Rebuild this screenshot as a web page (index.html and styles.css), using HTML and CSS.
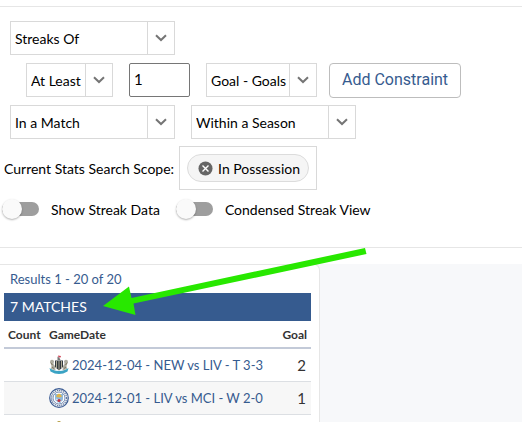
FILE: index.html
```html
<!DOCTYPE html>
<html lang="en">
<head>
    <meta charset="UTF-8">
    <meta name="viewport" content="width=device-width, initial-scale=1.0">
    <title>Streak Search</title>
    <link rel="stylesheet" href="styles.css">
</head>
<body>
    <form class="search-form">
        <div class="form-row">
            <div class="select-box wide">
                <select aria-label="Search type">
                    <option>Streaks Of</option>
                </select>
                <svg class="chevron" viewBox="0 0 12 8"><path d="M1 1.2 L6 6 L11 1.2"/></svg>
            </div>
        </div>
        <div class="form-row indent">
            <div class="select-box compare">
                <select aria-label="Comparison">
                    <option>At Least</option>
                </select>
                <svg class="chevron" viewBox="0 0 12 8"><path d="M1 1.2 L6 6 L11 1.2"/></svg>
            </div>
            <input class="amount" type="text" value="1" aria-label="Amount">
            <div class="stat-group">
                <div class="select-box stat">
                    <select aria-label="Stat">
                        <option>Goal - Goals</option>
                    </select>
                    <svg class="chevron" viewBox="0 0 12 8"><path d="M1 1.2 L6 6 L11 1.2"/></svg>
                </div>
                <button type="button" class="add-btn">Add Constraint</button>
            </div>
        </div>
        <div class="form-row">
            <div class="select-box wide">
                <select aria-label="Per">
                    <option>In a Match</option>
                </select>
                <svg class="chevron" viewBox="0 0 12 8"><path d="M1 1.2 L6 6 L11 1.2"/></svg>
            </div>
            <div class="select-box wide">
                <select aria-label="Span">
                    <option>Within a Season</option>
                </select>
                <svg class="chevron" viewBox="0 0 12 8"><path d="M1 1.2 L6 6 L11 1.2"/></svg>
            </div>
        </div>
        <div class="scope-row">
            <span>Current Stats Search Scope:</span>
            <div class="scope-box">
                <span class="chip">
                    <button type="button" class="chip-remove" aria-label="Remove In Possession">
                        <svg viewBox="0 0 16 16"><circle cx="8" cy="8" r="7.5"/><path d="M4.8 4.8 L11.2 11.2 M11.2 4.8 L4.8 11.2"/></svg>
                    </button>
                    In Possession
                </span>
            </div>
        </div>
        <div class="toggle-row">
            <label class="toggle"><input type="checkbox">Show Streak Data</label>
            <label class="toggle"><input type="checkbox">Condensed Streak View</label>
        </div>
    </form>

    <main class="results">
        <section class="results-card">
            <p class="results-count">Results 1 - 20 of 20</p>
            <table class="results-table">
                <caption>7 MATCHES</caption>
                <thead>
                    <tr>
                        <th class="count">Count</th>
                        <th>GameDate</th>
                        <th class="goal">Goal</th>
                    </tr>
                </thead>
                <tbody>
                    <tr>
                        <td></td>
                        <td>
                            <a href="#" class="game">
                                <svg class="crest" viewBox="0 0 20 20">
                                    <path d="M9 0.5 L12 1 L11.5 2.5 L9.5 2.5 Z" fill="#d0495a"/>
                                    <path d="M8.5 5 L8.5 1.5 L10.5 3 L11.5 5 Z" fill="#777"/>
                                    <path d="M6 5.5 H14 V12 L10 15.5 L6 12 Z" fill="#333a40"/>
                                    <path d="M7.5 6 V13 M10 6 V15 M12.5 6 V13" stroke="#cfc6aa" stroke-width="0.8"/>
                                    <path d="M1 6 Q3 3.5 5 6 L4.5 9 L6 11 L6.5 15.5 L2 14 L2.5 11 Z" fill="#aeaca0"/>
                                    <path d="M19 6 Q17 3.5 15 6 L15.5 9 L14 11 L13.5 15.5 L18 14 L17.5 11 Z" fill="#aeaca0"/>
                                    <path d="M1.5 7.5 L3.5 10 M18.5 7.5 L16.5 10 M3 12 L5 13.500 M17 12 L15 13.500" stroke="#756c52" stroke-width="0.8"/>
                                    <path d="M0.5 13 L3 14.5 Q10 17.5 17 14.5 L19.5 13 L18.5 16.5 Q10 21.5 1.500 16.500 Z" fill="#3aa3c4"/>
                                </svg>
                                2024-12-04 - NEW vs LIV - T 3-3
                            </a>
                        </td>
                        <td class="goal">2</td>
                    </tr>
                    <tr class="striped">
                        <td></td>
                        <td>
                            <a href="#" class="game">
                                <svg class="crest" viewBox="0 0 20 20">
                                    <circle cx="10" cy="10" r="9.3" fill="#f4f6f8" stroke="#3c5c94" stroke-width="1.2"/>
                                    <circle cx="10" cy="10" r="7.6" fill="none" stroke="#62789f" stroke-width="1.3" stroke-dasharray="1.2 0.9"/>
                                    <circle cx="10" cy="10" r="6" fill="#fff" stroke="#3c5c94" stroke-width="0.7"/>
                                    <path d="M6 6 H14 V11 Q13.5 14 10 15.5 Q6.5 14 6 11 Z" fill="#8fb9dc"/>
                                    <path d="M7 8.5 Q10 10.5 13 8.5 L12 6.8 L10 5.5 L8 6.8 Z" fill="#e0b64c"/>
                                    <path d="M7 11 L13 14 M6.5 13 L10 15" stroke="#fff" stroke-width="0.8"/>
                                    <circle cx="10" cy="12.5" r="1.6" fill="#bd3443"/>
                                </svg>
                                2024-12-01 - LIV vs MCI - W 2-0
                            </a>
                        </td>
                        <td class="goal">1</td>
                    </tr>
                    <tr>
                        <td></td>
                        <td>
                            <a href="#" class="game" aria-label="Match">
                                <svg class="crest" viewBox="0 0 20 20">
                                    <path d="M8 1 Q10 -1 12 1 L11 5 L14 7 L13 17 H7 L6 7 L9 5 Z" fill="#b39a3c"/>
                                </svg>
                            </a>
                        </td>
                        <td></td>
                    </tr>
                </tbody>
            </table>
            <svg class="pointer" viewBox="0 0 264 68">
                <path d="M262 0 L263.5 6 L30.5 55.5 L32.5 67 L0 58 L26 38.5 L28.5 50 Z"/>
            </svg>
        </section>
    </main>
</body>
</html>
```
FILE: styles.css
```css
* {
    margin: 0;
    padding: 0;
    box-sizing: border-box;
}

body {
    height: 100vh;
    display: flex;
    flex-direction: column;
    overflow: hidden;
    padding-top: 6px;
    background: #fff;
    color: #000;
    font-family: 'Lato', sans-serif;
    font-size: 14px;
}

button,
input,
select {
    font: inherit;
    color: inherit;
}

/* search form */
.search-form {
    display: flex;
    flex-direction: column;
    gap: 8px;
    flex-shrink: 0;
    padding-top: 14px;
    padding-bottom: 26px;
    border-top: 1px solid #e6e6e6;
    border-bottom: 1px solid #e6e6e6;
}

.form-row {
    display: flex;
    gap: 16px;
    height: 34px;
    padding-left: 10px;
}

.form-row.indent {
    padding-left: 26px;
}

.select-box {
    display: grid;
    grid-template-columns: 1fr 27px;
    height: 34px;
    border: 1px solid #d9d9d9;
}

.select-box.wide {
    width: 165px;
}

.select-box.compare {
    width: 87px;
}

.select-box.stat {
    width: 111px;
}

.select-box select {
    grid-area: 1 / 1 / 2 / 3;
    appearance: none;
    width: 100%;
    padding-left: 4px;
    border: none;
    background: transparent;
    cursor: pointer;
}

.chevron {
    grid-area: 1 / 2 / 2 / 3;
    width: 100%;
    height: 100%;
    padding: 8px 7px;
    border-left: 1px solid #d9d9d9;
    pointer-events: none;
}

.chevron path {
    fill: none;
    stroke: #757575;
    stroke-width: 2;
}

.amount {
    width: 61px;
    height: 34px;
    padding: 0 4px 2px;
    border: 1px solid #767676;
    border-radius: 2px;
    font-size: 15px;
}

.stat-group {
    display: flex;
    gap: 12px;
}

.add-btn {
    height: 35px;
    padding: 0 12px 2px;
    border: 1px solid #bdbdbd;
    border-radius: 4px;
    background: #fff;
    color: #365b8f;
    font-family: 'Roboto', sans-serif;
    font-size: 16px;
    cursor: pointer;
}

.scope-row {
    display: flex;
    align-items: center;
    gap: 5px;
    height: 42px;
    padding-left: 4px;
}

.scope-box {
    padding: 7px;
    border: 1px solid #d9d9d9;
}

.chip {
    display: flex;
    align-items: center;
    gap: 5px;
    height: 28px;
    padding: 0 8px 0 10px;
    border: 1px solid #dcdcdc;
    border-radius: 14px;
    background: #f5f5f5;
}

.chip-remove {
    width: 15px;
    height: 15px;
    border: none;
    background: none;
    cursor: pointer;
}

.chip-remove svg {
    display: block;
}

.chip-remove circle {
    fill: #666;
}

.chip-remove path {
    stroke: #fff;
    stroke-width: 1.5;
}

.toggle-row {
    display: flex;
    gap: 16px;
    padding-left: 2px;
}

.toggle {
    display: flex;
    align-items: center;
    gap: 12px;
    height: 24px;
    cursor: pointer;
}

.toggle input {
    appearance: none;
    display: flex;
    align-items: center;
    width: 37px;
    height: 14px;
    border-radius: 7px;
    background: #9e9e9e;
}

.toggle input::before {
    content: '';
    width: 20px;
    height: 20px;
    border-radius: 50%;
    background: #fafafa;
    box-shadow: 0 1px 2px rgba(0, 0, 0, 0.3);
}

.toggle input:checked::before {
    margin-left: auto;
}

/* results */
.results {
    flex: 1 0 auto;
    margin-top: 16px;
    background: #f7f8fa;
}

.results-card {
    position: relative;
    width: 320px;
    padding: 4px 8px 0 4px;
    border: 1px solid #e6e6e6;
    border-left: none;
    border-radius: 0 6px 0 0;
    background: #fff;
}

.results-count {
    padding: 0 6px 4px;
    color: #365b8f;
    font-size: 13px;
    line-height: 20px;
}

.results-table {
    width: 100%;
    border-collapse: collapse;
}

.results-table caption {
    padding: 0 6px;
    background: #365b8f;
    color: #fff;
    line-height: 28px;
    text-align: left;
}

.results-table th {
    height: 27px;
    padding: 0 4px;
    border-bottom: 2px solid #c3cad8;
    color: #333;
    font-size: 12px;
    text-align: left;
}

.results-table th.count {
    width: 41px;
}

.results-table td {
    height: 33px;
    padding: 0 4px;
    border-bottom: 1px solid #dcdfe3;
    color: #333;
    font-size: 13px;
}

.results-table .goal {
    padding-right: 4px;
    text-align: right;
}

.results-table td.goal {
    padding-right: 5px;
    font-size: 15px;
}

.results-table .striped {
    background: #f7f7f7;
}

.game {
    display: flex;
    align-items: center;
    gap: 3px;
    color: #365b8f;
    text-decoration: none;
    white-space: nowrap;
}

.crest {
    width: 20px;
    height: 20px;
    flex-shrink: 0;
}

/* arrow over the match count */
.pointer {
    position: absolute;
    top: -17px;
    left: 103px;
    width: 264px;
    height: 68px;
    pointer-events: none;
}

.pointer path {
    fill: #28e800;
}
```
